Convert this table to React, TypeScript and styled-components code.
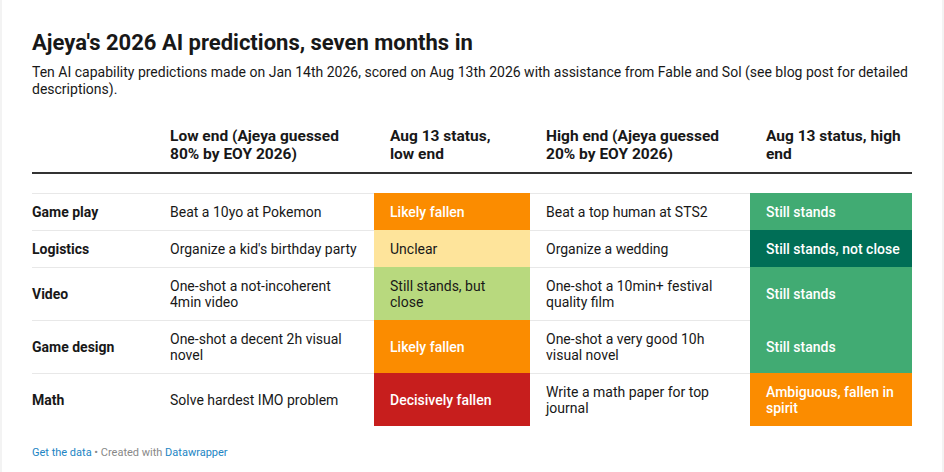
import React from 'react';
import styled, { createGlobalStyle } from 'styled-components';

const GlobalStyle = createGlobalStyle`
  html, body {
    margin: 0;
    padding: 0;
    background: #f3f3f3;
  }
  body {
    font-family: Roboto, "Liberation Sans", Arial, sans-serif;
    color: #181818;
  }
`;

const Frame = styled.div`
  margin: 0 2px;
  background: #ffffff;
  height: 472px;
  box-sizing: border-box;
  padding: 30px 30px 0 30px;
`;

const Title = styled.h1`
  margin: 0;
  font-size: 22px;
  line-height: 26px;
  font-weight: 700;
  color: #181818;
`;

const Subtitle = styled.p`
  margin: 8px 0 0;
  font-size: 14px;
  line-height: 17px;
  color: #181818;
`;

const Table = styled.table`
  margin-top: 29px;
  width: 880px;
  border-collapse: collapse;
  table-layout: fixed;
  font-size: 14px;
  line-height: 16px;
`;

const HeadCell = styled.th`
  text-align: left;
  vertical-align: bottom;
  font-weight: 700;
  font-size: 15.5px;
  line-height: 18px;
  padding: 0 16px 9px;
  border-bottom: 2px solid #333333;
  &:first-child { padding-left: 0; }
  &:last-child { padding-right: 8px; }
`;

const Spacer = styled.td`
  height: 19px;
  padding: 0;
`;

const Cell = styled.td<{ $bg?: string; $light?: boolean }>`
  padding: 10px 16px;
  vertical-align: middle;
  border-top: 1px solid ${p => p.$bg ?? '#e8e8e8'};
  background: ${p => p.$bg ?? 'transparent'};
  color: ${p => (p.$bg && !p.$light ? '#ffffff' : '#181818')};
  font-weight: ${p => (p.$bg && !p.$light ? 500 : 400)};
  &:last-child { padding-right: 8px; }
`;

const LabelCell = styled(Cell)`
  padding-left: 0;
  font-weight: 700;
`;

const Footer = styled.div`
  margin-top: 20px;
  font-size: 11px;
  line-height: 14px;
  color: #888888;
`;

const Link = styled.a`
  color: #2285c4;
  text-decoration: none;
`;

const ORANGE = '#fb8c00';
const YELLOW = '#fee49b';
const LIME = '#b8d97e';
const GREEN = '#41ab73';
const DARK = '#006e56';
const RED = '#c71e1d';

type Status = { text: string; bg: string; light?: boolean };
type Row = { area: string; low: string; lowStatus: Status; high: string; highStatus: Status };

const rows: Row[] = [
  {
    area: 'Game play',
    low: 'Beat a 10yo at Pokemon',
    lowStatus: { text: 'Likely fallen', bg: ORANGE },
    high: 'Beat a top human at STS2',
    highStatus: { text: 'Still stands', bg: GREEN },
  },
  {
    area: 'Logistics',
    low: "Organize a kid's birthday party",
    lowStatus: { text: 'Unclear', bg: YELLOW, light: true },
    high: 'Organize a wedding',
    highStatus: { text: 'Still stands, not close', bg: DARK },
  },
  {
    area: 'Video',
    low: 'One-shot a not-incoherent 4min video',
    lowStatus: { text: 'Still stands, but close', bg: LIME, light: true },
    high: 'One-shot a 10min+ festival quality film',
    highStatus: { text: 'Still stands', bg: GREEN },
  },
  {
    area: 'Game design',
    low: 'One-shot a decent 2h visual novel',
    lowStatus: { text: 'Likely fallen', bg: ORANGE },
    high: 'One-shot a very good 10h visual novel',
    highStatus: { text: 'Still stands', bg: GREEN },
  },
  {
    area: 'Math',
    low: 'Solve hardest IMO problem',
    lowStatus: { text: 'Decisively fallen', bg: RED },
    high: 'Write a math paper for top journal',
    highStatus: { text: 'Ambiguous, fallen in spirit', bg: ORANGE },
  },
];

export default function App() {
  return (
    <>
      <GlobalStyle />
      <Frame>
        <Title>Ajeya's 2026 AI predictions, seven months in</Title>
        <Subtitle>
          Ten AI capability predictions made on Jan 14th 2026, scored on Aug 13th 2026 with assistance from Fable and Sol (see blog post for detailed descriptions).
        </Subtitle>
        <Table>
          <colgroup>
            <col style={{ width: 122 }} />
            <col style={{ width: 220 }} />
            <col style={{ width: 156 }} />
            <col style={{ width: 220 }} />
            <col style={{ width: 162 }} />
          </colgroup>
          <thead>
            <tr>
              <HeadCell></HeadCell>
              <HeadCell>Low end (Ajeya guessed 80% by EOY 2026)</HeadCell>
              <HeadCell>Aug 13 status, low end</HeadCell>
              <HeadCell>High end (Ajeya guessed 20% by EOY 2026)</HeadCell>
              <HeadCell>Aug 13 status, high end</HeadCell>
            </tr>
          </thead>
          <tbody>
            <tr>
              <Spacer colSpan={5} />
            </tr>
            {rows.map(r => (
              <tr key={r.area}>
                <LabelCell>{r.area}</LabelCell>
                <Cell>{r.low}</Cell>
                <Cell $bg={r.lowStatus.bg} $light={r.lowStatus.light}>{r.lowStatus.text}</Cell>
                <Cell>{r.high}</Cell>
                <Cell $bg={r.highStatus.bg} $light={r.highStatus.light}>{r.highStatus.text}</Cell>
              </tr>
            ))}
          </tbody>
        </Table>
        <Footer>
          <Link href="#">Get the data</Link> • Created with <Link href="#">Datawrapper</Link>
        </Footer>
      </Frame>
    </>
  );
}
